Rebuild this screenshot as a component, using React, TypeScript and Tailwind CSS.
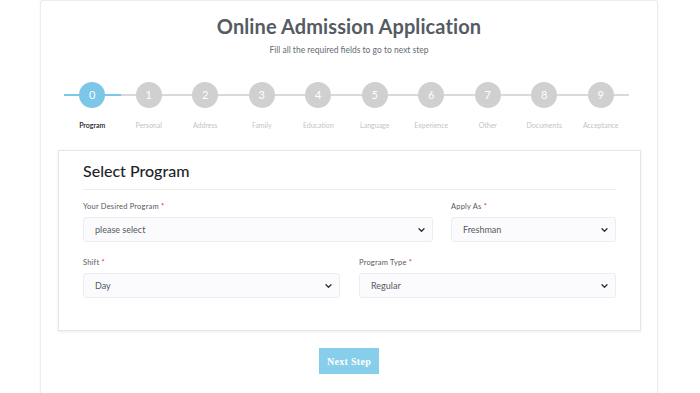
import React from 'react';

const STEPS = ['Program', 'Personal', 'Address', 'Family', 'Education', 'Language', 'Experience', 'Other', 'Documents', 'Acceptance'];

function Chevron() {
  return (
    <svg className="pointer-events-none absolute right-[7px] top-1/2 -translate-y-1/2" width="7" height="5" viewBox="0 0 7 5" fill="none">
      <path d="M1 1.2 L3.5 3.7 L6 1.2" stroke="#333" strokeWidth="1.4" strokeLinecap="round" strokeLinejoin="round" />
    </svg>
  );
}

function Field({ label, value, className }: { label: string; value: string; className?: string }) {
  return (
    <div className={className}>
      <p className="text-[7.5px] text-[#555a62] tracking-[0.2px] mb-[5px] leading-[11px]">
        {label} <span className="text-[#e3342f]">*</span>
      </p>
      <div className="relative h-[25px] rounded-[3px] border border-[#ebedf2] bg-[#fbfbfd] flex items-center pl-[11px]">
        <span className="text-[9px] text-[#555a60]">{value}</span>
        <Chevron />
      </div>
    </div>
  );
}

export default function App() {
  return (
    <div className="w-[700px] h-[393px] bg-white overflow-hidden font-['Lato','Noto_Sans',sans-serif]">
      <div className="ml-[40px] w-[618px] h-[400px] border-x border-t border-[#ececec] rounded-t-[3px] shadow-[0_0_3px_rgba(0,0,0,0.05)] flex flex-col">
        <h1 className="text-center mt-[11px] text-[20px] font-bold text-[#555b63] leading-[28px] tracking-[0.1px]">Online Admission Application</h1>
        <p className="text-center mt-[4px] text-[8.5px] text-[#666b72] leading-[12px]">Fill all the required fields to go to next step</p>

        <div className="ml-[23px] w-[565px] mt-[26px] grid grid-cols-10">
          {STEPS.map((s, i) => (
            <div key={s} className="flex flex-col items-center">
              <div className="relative w-full h-[26px] flex justify-center">
                <div className={`absolute left-0 right-0 top-[12px] h-[2px] ${i === 0 ? 'bg-[#7cc6e8]' : 'bg-[#d9d9d9]'}`} />
                <div className={`relative w-[26px] h-[26px] rounded-full flex items-center justify-center text-[11px] text-white ${i === 0 ? 'bg-[#7cc6e8]' : 'bg-[#d0d0d0]'}`}>{i}</div>
              </div>
              <span className={`mt-[12px] text-[7px] leading-[10px] ${i === 0 ? 'text-[#222] font-semibold' : 'text-[#c4c4c4]'}`}>{s}</span>
            </div>
          ))}
        </div>

        <div className="ml-[17px] w-[583px] mt-[20px] h-[181px] border border-[#e6e6e6] shadow-[0_1px_3px_rgba(0,0,0,0.08)] bg-white px-[24px] pt-[9px]">
          <h2 className="text-[16px] text-[#1f2328] leading-[22px] font-medium">Select Program</h2>
          <div className="mt-[7px] h-px bg-[#ececec]" />
          <div className="mt-[11px] flex gap-[18px]">
            <Field className="w-[350px]" label="Your Desired Program" value="please select" />
            <Field className="flex-1" label="Apply As" value="Freshman" />
          </div>
          <div className="mt-[15px] flex gap-[19px]">
            <Field className="flex-1" label="Shift" value="Day" />
            <Field className="flex-1" label="Program Type" value="Regular" />
          </div>
        </div>

        <div className="flex justify-center mt-[17px]">
          <button className="w-[60px] h-[26px] bg-[#87ceeb] text-white text-[10px] font-bold font-['Liberation_Serif',serif] tracking-[0.3px]">Next Step</button>
        </div>
      </div>
    </div>
  );
}
